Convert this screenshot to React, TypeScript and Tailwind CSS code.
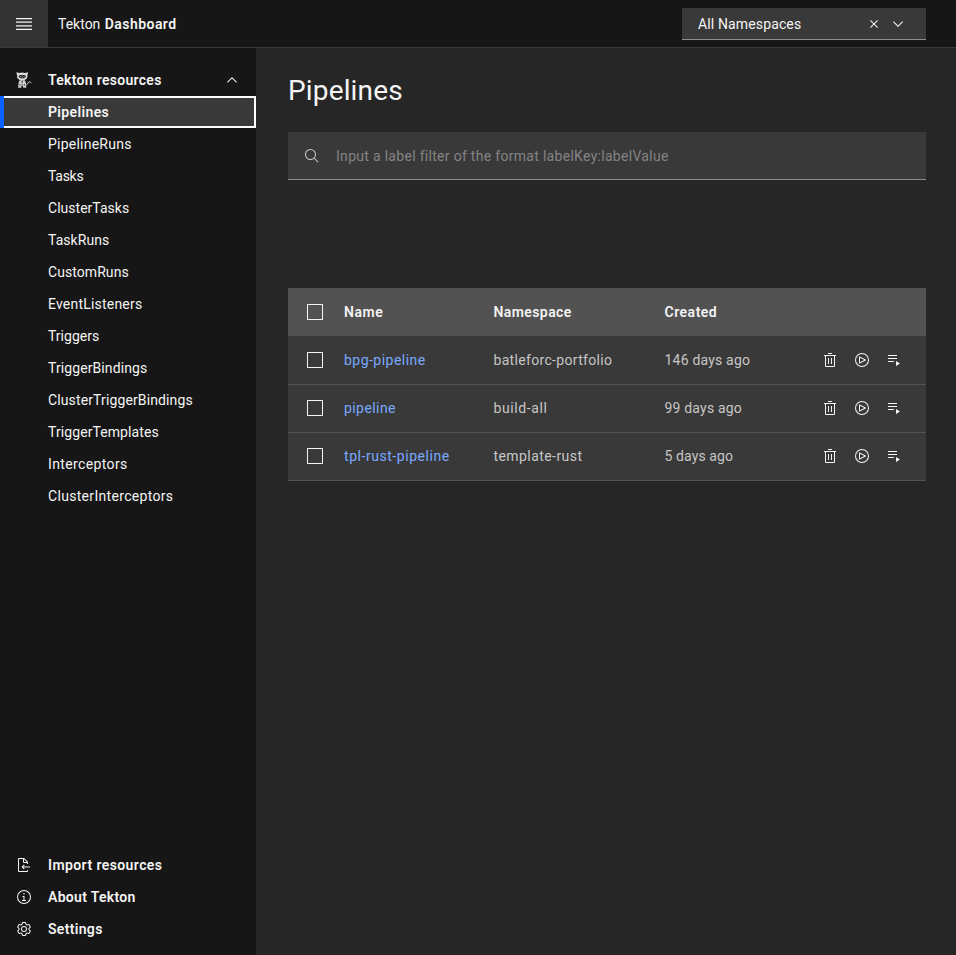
import type { ReactNode } from 'react';

type IconProps = { d: string[]; size?: number; box?: number; className?: string };

function Icon({ d, size = 16, box = 32, className = '' }: IconProps) {
  return (
    <svg
      width={size}
      height={size}
      viewBox={`0 0 ${box} ${box}`}
      fill="currentColor"
      className={`block shrink-0 ${className}`}
      aria-hidden="true"
    >
      {d.map((path) => (
        <path key={path} d={path} />
      ))}
    </svg>
  );
}

const icons = {
  menu: ['M2 14.8H18V16H2zM2 11.2H18V12.4H2zM2 7.6H18V8.8H2zM2 4H18V5.2H2z'],
  close: [
    'M17.4141 16 24 9.4141 22.5859 8 16 14.5859 9.4143 8 8 9.4141 14.5859 16 8 22.5859 9.4143 24 16 17.4141 22.5859 24 24 22.5859 17.4141 16z',
  ],
  chevronDown: ['M8 11 3 6 3.7 5.3 8 9.6 12.3 5.3 13 6z'],
  chevronUp: ['M8 5 13 10 12.3 10.7 8 6.4 3.7 10.7 3 10z'],
  search: [
    'M29,27.5859l-7.5521-7.5521a11.0177,11.0177,0,1,0-1.4141,1.4141L27.5859,29ZM4,13a9,9,0,1,1,9,9A9.01,9.01,0,0,1,4,13Z',
  ],
  trash: [
    'M12 12H14V24H12zM18 12H20V24H18z',
    'M4 6V8H6V28a2 2 0 002 2H24a2 2 0 002-2V8h2V6zM8 28V8H24V28zM12 2H20V4H12z',
  ],
  play: [
    'M11,23a1,1,0,0,1-1-1V10a1,1,0,0,1,1.4473-.8945l12,6a1,1,0,0,1,0,1.789l-12,6A1.001,1.001,0,0,1,11,23Zm1-11.3821v8.7642L20.7642,16Z',
    'M16,4A12,12,0,1,1,4,16,12,12,0,0,1,16,4m0-2A14,14,0,1,0,30,16,14,14,0,0,0,16,2Z',
  ],
  playlist: ['M4 6H22V8H4zM4 12H22V14H4zM4 18H16V20H4z', 'M20 18 28 23 20 28z'],
  importDoc: [
    'M28 19 14.83 19 17.41 16.41 16 15 11 20 16 25 17.41 23.59 14.83 21 28 21 28 19z',
    'M24,14V10a1,1,0,0,0-.29-.71l-7-7A1,1,0,0,0,16,2H6A2,2,0,0,0,4,4V28a2,2,0,0,0,2,2H22a2,2,0,0,0,2-2V26H22v2H6V4h8v6a2,2,0,0,0,2,2h6v2Zm-8-4V4.41L21.59,10Z',
  ],
  info: [
    'M17 22 17 14 13 14 13 16 15 16 15 22 12 22 12 24 20 24 20 22 17 22zM16,8a1.5,1.5,0,1,0,1.5,1.5A1.5,1.5,0,0,0,16,8Z',
    'M16,30A14,14,0,1,1,30,16,14,14,0,0,1,16,30ZM16,4A12,12,0,1,0,28,16,12,12,0,0,0,16,4Z',
  ],
  settings: [
    'M27,16.76c0-.25,0-.5,0-.76s0-.51,0-.77l1.92-1.68A2,2,0,0,0,29.3,11L26.94,7a2,2,0,0,0-1.73-1,2,2,0,0,0-.64.1l-2.43.82a11.35,11.35,0,0,0-1.31-.75l-.51-2.52a2,2,0,0,0-2-1.61H13.64a2,2,0,0,0-2,1.61l-.51,2.52a11.48,11.48,0,0,0-1.32.75L7.43,6.06A2,2,0,0,0,6.79,6,2,2,0,0,0,5.06,7L2.7,11a2,2,0,0,0,.41,2.51L5,15.24c0,.25,0,.5,0,.76s0,.51,0,.77L3.11,18.45A2,2,0,0,0,2.7,21L5.06,25a2,2,0,0,0,1.73,1,2,2,0,0,0,.64-.1l2.43-.82a11.35,11.35,0,0,0,1.31.75l.51,2.52a2,2,0,0,0,2,1.61h4.72a2,2,0,0,0,2-1.61l.51-2.52a11.48,11.48,0,0,0,1.32-.75l2.42.82a2,2,0,0,0,.64.1,2,2,0,0,0,1.73-1L29.3,21a2,2,0,0,0-.41-2.51ZM25.21,24l-3.43-1.16a8.86,8.86,0,0,1-2.71,1.57L18.36,28H13.64l-.71-3.55a9.36,9.36,0,0,1-2.7-1.57L6.79,24,4.43,20l2.72-2.4a8.9,8.9,0,0,1,0-3.13L4.43,12,6.79,8l3.43,1.16a8.86,8.86,0,0,1,2.71-1.57L13.64,4h4.72l.71,3.55a9.36,9.36,0,0,1,2.7,1.57L25.21,8,27.57,12l-2.72,2.4a8.9,8.9,0,0,1,0,3.13L27.57,20Z',
    'M16,22a6,6,0,1,1,6-6A5.94,5.94,0,0,1,16,22Zm0-10a3.91,3.91,0,0,0-4,4,3.91,3.91,0,0,0,4,4,3.91,3.91,0,0,0,4-4A3.91,3.91,0,0,0,16,12Z',
  ],
};

function TektonCat() {
  return (
    <svg width="16" height="16" viewBox="0 0 16 16" className="block shrink-0" aria-hidden="true">
      <path
        d="M.3 .2 3.4 1.1C5 .4 7.4 .4 9 1.1L12.2 .2 11.3 3.4C11.6 4.6 11.2 6.2 10.2 7.1 9.2 8 7.8 8.4 6.2 8.4 4.6 8.4 3.2 8 2.3 7.1 1.2 6.2 .9 4.6 1.2 3.4z"
        fill="#dcdcdc"
      />
      <path d="M2.6 4.2C3 3 4.4 2.8 6.2 3.2 8 2.8 9.5 3 9.9 4.2 9.9 5.6 8.6 6.4 6.2 6.4 4 6.4 2.6 5.6 2.6 4.2z" fill="#2c2c2c" />
      <path d="M3.9 3.9h1.1v.9H3.9zM7.5 3.9h1.1v.9H7.5z" fill="#c6c6c6" />
      <path d="M5.5 5.3h1.5v1H5.5z" fill="#8d8d8d" />
      <path d="M3.6 8.2H8.9C9.9 10 10.5 13 10.2 15.7H7.1V14H5.4V15.7H2.3C2 13 2.6 10 3.6 8.2z" fill="#cfcfcf" />
      <path d="M5.4 9.3h1.6v1.2H5.4zM3.6 12h1v1.4h-1zM7.9 12h1v1.4h-1zM5.8 12h.9v1.4h-.9z" fill="#393939" />
      <path
        d="M10.4 12.6C12.4 12.4 11.8 9.7 13.5 9.7 14.4 9.7 14.8 10.4 15.2 11.2"
        fill="none"
        stroke="#d0d0d0"
        strokeWidth="1"
      />
    </svg>
  );
}

const resources = [
  { label: 'PipelineRuns', tracking: 'tracking-[0.236px]' },
  { label: 'Tasks', tracking: 'tracking-[-0.276px]' },
  { label: 'ClusterTasks', tracking: 'tracking-[0.022px]' },
  { label: 'TaskRuns', tracking: 'tracking-[0.051px]' },
  { label: 'CustomRuns', tracking: 'tracking-[0.067px]' },
  { label: 'EventListeners', tracking: 'tracking-[0.2px]' },
  { label: 'Triggers', tracking: 'tracking-[0.013px]' },
  { label: 'TriggerBindings', tracking: 'tracking-[0.093px]' },
  { label: 'ClusterTriggerBindings', tracking: 'tracking-[0.123px]' },
  { label: 'TriggerTemplates', tracking: 'tracking-[0.086px]' },
  { label: 'Interceptors', tracking: 'tracking-[0.377px]' },
  { label: 'ClusterInterceptors', tracking: 'tracking-[0.315px]' },
];

const footerLinks = [
  { label: 'Import resources', icon: icons.importDoc, tracking: 'tracking-[0.409px]' },
  { label: 'About Tekton', icon: icons.info, tracking: 'tracking-[0.31px]' },
  { label: 'Settings', icon: icons.settings, tracking: 'tracking-[0.32px]' },
];

const pipelines = [
  {
    name: 'bpg-pipeline',
    nameTracking: 'tracking-[0.48px]',
    namespace: 'batleforc-portfolio',
    namespaceTracking: 'tracking-[0.32px]',
    created: '146 days ago',
    createdTracking: 'tracking-[0.2px]',
  },
  {
    name: 'pipeline',
    nameTracking: 'tracking-[0.425px]',
    namespace: 'build-all',
    namespaceTracking: 'tracking-[0.6px]',
    created: '99 days ago',
    createdTracking: 'tracking-[0.19px]',
  },
  {
    name: 'tpl-rust-pipeline',
    nameTracking: 'tracking-[0.548px]',
    namespace: 'template-rust',
    namespaceTracking: 'tracking-[0.432px]',
    created: '5 days ago',
    createdTracking: 'tracking-[0.11px]',
  },
];

function Checkbox() {
  return <span className="ml-[19px] block size-4 border border-[#f4f4f4]" role="checkbox" aria-checked="false" />;
}

function Row({ children, className }: { children: ReactNode; className: string }) {
  return (
    <div
      role="row"
      className={`grid h-12 grid-cols-[56px_149.5px_171px_157.5px_1fr] items-center ${className}`}
    >
      {children}
    </div>
  );
}

export default function App() {
  return (
    <div className="flex h-[955px] w-full flex-col overflow-hidden bg-[#262626] font-[Roboto,'Open_Sans',sans-serif] text-sm leading-[18px] text-[#f4f4f4]">
      <header className="flex h-12 shrink-0 items-stretch border-b border-[#393939] bg-[#161616]">
        <button className="flex h-[47px] w-12 items-center justify-center bg-[#333333] pt-px" aria-label="Menu">
          <Icon d={icons.menu} size={20} box={20} />
        </button>
        <div className="flex h-12 items-center pl-[10px]">
          <span className="w-[46.8px]">Tekton</span>
          <span className="font-semibold tracking-[0.44px]">Dashboard</span>
        </div>
        <div className="mt-2 mr-[30px] ml-auto flex h-8 w-[244px] items-center border-b border-[#8d8d8d] bg-[#393939] pt-px pr-5 pl-4">
          <span className="flex-1 tracking-[0.134px]">All Namespaces</span>
          <Icon d={icons.close} className="mr-2" />
          <Icon d={icons.chevronDown} box={16} />
        </div>
      </header>

      <div className="flex min-h-0 flex-1">
        <nav className="flex w-64 shrink-0 flex-col bg-[#161616] pt-4 pb-[10px]">
          <div className="flex h-8 items-center pr-4 pl-4">
            <TektonCat />
            <span className="ml-4 flex-1 font-semibold tracking-[0.293px]">Tekton resources</span>
            <Icon d={icons.chevronUp} box={16} />
          </div>
          <a className="flex h-8 items-stretch bg-[#393939]">
            <span className="w-1 bg-[#0f62fe]" />
            <span className="flex flex-1 items-center border-2 border-l-0 border-white pl-11 font-semibold tracking-[0.37px]">
              Pipelines
            </span>
          </a>
          {resources.map((item) => (
            <a key={item.label} className={`flex h-8 items-center pl-12 ${item.tracking}`}>
              {item.label}
            </a>
          ))}
          <div className="mt-auto">
            {footerLinks.map((item) => (
              <a key={item.label} className="flex h-8 items-center gap-4 pl-4">
                <Icon d={item.icon} />
                <span className={`font-semibold ${item.tracking}`}>{item.label}</span>
              </a>
            ))}
          </div>
        </nav>

        <main className="flex-1 pt-[25px] pr-[30px] pl-8">
          <h1 className="text-[28px] leading-9 tracking-[0.15px]">Pipelines</h1>

          <div className="mt-[23px] flex h-12 items-center gap-4 border-b border-[#8d8d8d] bg-[#393939] pt-px pl-4">
            <Icon d={icons.search} className="text-[#c6c6c6]" />
            <span className="tracking-[0.3px] text-[#848484]">
              Input a label filter of the format labelKey:labelValue
            </span>
          </div>

          <div role="table" className="mt-[108px] bg-[#393939]">
            <Row className="bg-[#525252] font-semibold">
              <Checkbox />
              <span className="tracking-[0.58px]">Name</span>
              <span className="tracking-[0.406px]">Namespace</span>
              <span className="tracking-[0.503px]">Created</span>
            </Row>
            {pipelines.map((row) => (
              <Row key={row.name} className="text-[#c6c6c6] shadow-[0_1px_0_#525252]">
                <Checkbox />
                <a className={`text-[#78a9ff] ${row.nameTracking}`}>{row.name}</a>
                <span className={row.namespaceTracking}>{row.namespace}</span>
                <span className={row.createdTracking}>{row.created}</span>
                <span className="flex gap-4 text-[#f4f4f4]">
                  <Icon d={icons.trash} />
                  <Icon d={icons.play} />
                  <Icon d={icons.playlist} />
                </span>
              </Row>
            ))}
          </div>
        </main>
      </div>
    </div>
  );
}
